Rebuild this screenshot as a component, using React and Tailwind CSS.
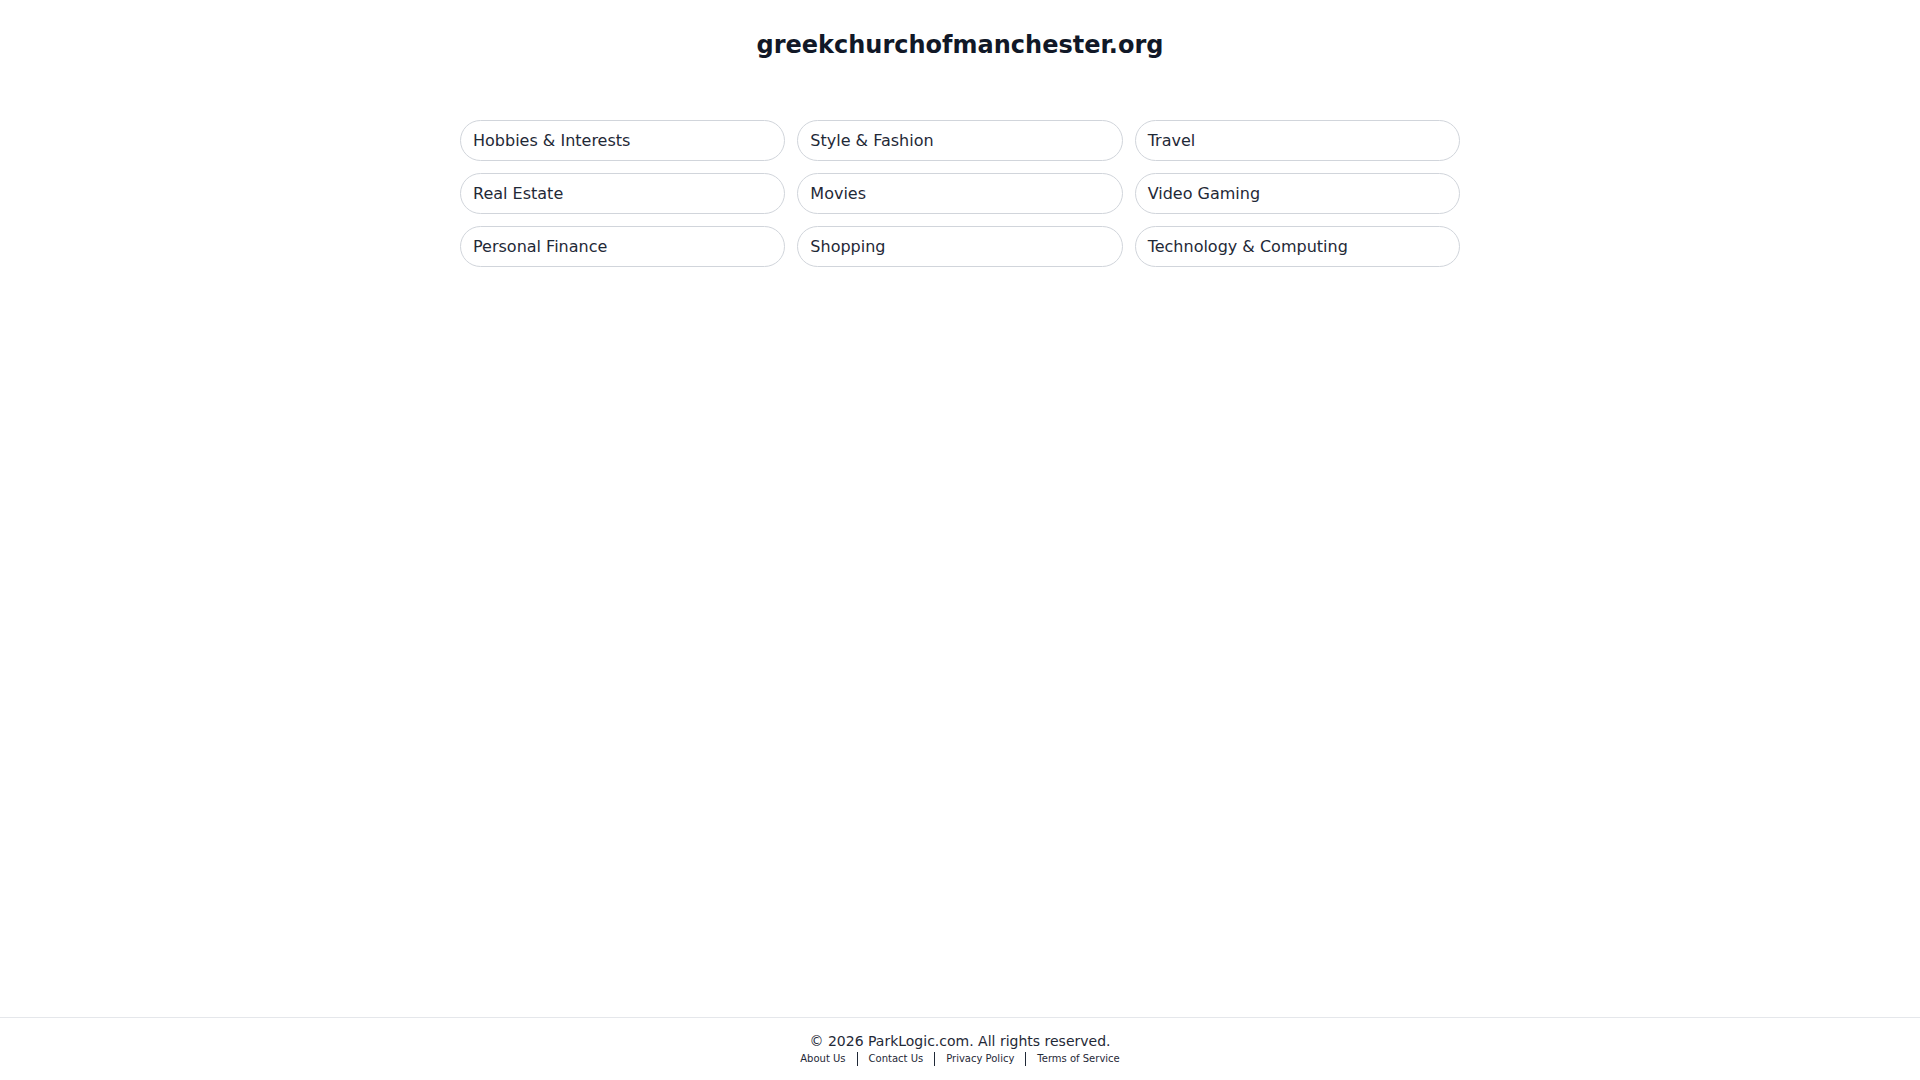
import React from "react";

const items = [
  "Hobbies & Interests",
  "Style & Fashion",
  "Travel",
  "Real Estate",
  "Movies",
  "Video Gaming",
  "Personal Finance",
  "Shopping",
  "Technology & Computing",
];

export default function App() {
  return (
    <div
      className="min-h-screen flex flex-col bg-white text-[#111827]"
      style={{ fontFamily: '"DejaVu Sans", sans-serif' }}
    >
      <main className="flex-1">
        <h1 className="pt-[29px] text-center text-[24px] leading-8 font-bold text-[#111827]">
          greekchurchofmanchester.org
        </h1>
        <div className="mx-auto mt-[59px] w-[1000px] grid grid-cols-3 gap-x-3 gap-y-3">
          {items.map((t) => (
            <a
              key={t}
              href="#"
              className="block rounded-full border border-[#d1d5db] px-3 py-2 text-base text-[#1f2937] h-[41px] leading-[23px]"
            >
              {t}
            </a>
          ))}
        </div>
      </main>
      <footer className="border-t border-[#e5e7eb] pt-[13px] pb-[13px] text-center">
        <p className="text-[14px] leading-5 text-[#1f2937]">
          © 2026 ParkLogic.com. All rights reserved.
        </p>
        <div className="flex items-center justify-center text-[10px] leading-4 text-[#1f2937]">
          <a href="#">About Us</a>
          <span className="mx-[11px] h-[14px] w-px bg-[#1f2937]"></span>
          <a href="#">Contact Us</a>
          <span className="mx-[11px] h-[14px] w-px bg-[#1f2937]"></span>
          <a href="#">Privacy Policy</a>
          <span className="mx-[11px] h-[14px] w-px bg-[#1f2937]"></span>
          <a href="#">Terms of Service</a>
        </div>
      </footer>
    </div>
  );
}
